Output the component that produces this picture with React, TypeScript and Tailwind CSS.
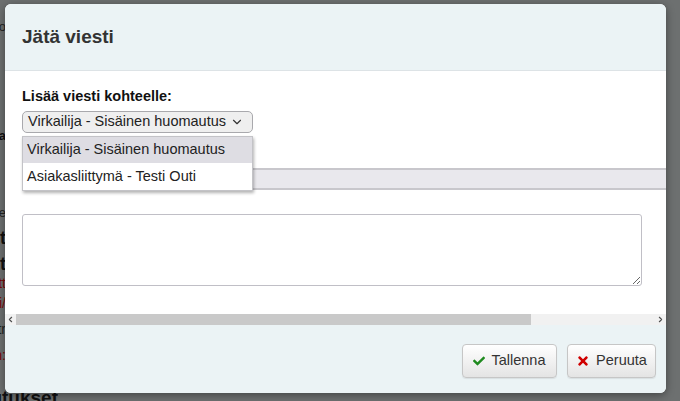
import { ChevronDown, ChevronLeft, ChevronRight } from 'lucide-react'
import { FaCheck, FaTimes } from 'react-icons/fa'

const font = { fontFamily: '"Liberation Sans", Arial, sans-serif' }

// page fragments that peek out from behind the modal on the left
const edgeRows = [
  { h: 'h-[20px]', text: '', cls: '' },
  { h: 'h-[14px]', text: 'Toimitusehto', cls: 'text-[13px] text-[#222]' },
  { h: 'h-[92px]', text: '', cls: '' },
  { h: 'h-[20px]', text: 'Tila', cls: 'text-[13px] font-bold text-[#111]' },
  { h: 'h-[56px]', text: '', cls: '' },
  { h: 'h-[22px]', text: 'Tuote', cls: 'text-[13px] text-[#222]' },
  { h: 'h-[28px]', text: 'Tilaukset', cls: 'text-[18px] font-bold text-[#111]' },
  { h: 'h-[24px]', text: 'Tiedot', cls: 'text-[18px] font-bold text-[#111]' },
  { h: 'h-[14px]', text: 'Puuttuu tt', cls: 'text-[14px] text-[#7a0b0b]' },
  { h: 'h-[26px]', text: 'Kuljetus i/', cls: 'text-[14px] text-[#7a0b0b]' },
  { h: 'h-[26px]', text: 'Selitr', cls: 'text-[14px] text-[#222]' },
  { h: 'h-[26px]', text: 'Huom:', cls: 'text-[14px] text-[#7a0b0b]' },
  { h: 'h-[20px]', text: '', cls: '' },
]

function Button({ icon, label, width }: { icon: React.ReactNode; label: string; width: string }) {
  return (
    <button
      type="button"
      className={`flex h-[34px] ${width} items-center justify-center gap-[6px] rounded-[4px] border border-[#c6c6c6] bg-gradient-to-b from-white to-[#e4e4e4] text-[14.5px] text-[#333] shadow-[0_1px_1px_rgba(0,0,0,0.08)]`}
    >
      {icon}
      <span>{label}</span>
    </button>
  )
}

export default function App() {
  return (
    <div className="relative h-[401px] w-[680px] overflow-hidden bg-[#6d7070]" style={font}>
      <div className="flex flex-col">
        {edgeRows.map((row, i) => (
          <div key={i} className={`${row.h} flex w-[6px] items-center justify-end overflow-hidden whitespace-nowrap`}>
            <span className={row.cls}>{row.text}</span>
          </div>
        ))}
        <div className="flex w-[58px] items-start justify-end overflow-hidden whitespace-nowrap">
          <span className="text-[19px] font-bold leading-none text-[#111]">Huomautukset</span>
        </div>
      </div>

      <div className="absolute left-[5px] top-[4px] flex h-[389px] w-[661px] flex-col overflow-hidden rounded-[6px] bg-white shadow-[0_2px_8px_rgba(0,0,0,0.4)]">
        <div className="flex h-[67px] shrink-0 items-center border-b border-[#dde3e6] bg-[#ebf3f5] px-[17px]">
          <h1 className="text-[19px] font-bold text-[#333]">Jätä viesti</h1>
        </div>

        <div className="flex h-[254px] shrink-0 flex-col">
          <div className="flex-1 overflow-hidden">
            <div className="w-[820px] px-[17px] pt-[17px]">
              <label className="mb-[6px] block text-[14.5px] font-bold leading-[17px] text-[#111]">
                Lisää viesti kohteelle:
              </label>
              <div className="relative w-[231px]">
                <div className="flex h-[22px] items-center justify-between rounded-[5px] border border-[#a9a9ad] bg-[#efefef] pl-[5px] pr-[8px] text-[14.5px] text-[#222]">
                  <span>Virkailija - Sisäinen huomautus</span>
                  <ChevronDown size={14} strokeWidth={2} className="text-[#333]" />
                </div>
                <div className="absolute left-0 top-[25px] z-10 w-[231px] border border-[#c3c3c7] bg-white shadow-[1px_2px_3px_rgba(0,0,0,0.3)]">
                  <div className="flex h-[26px] items-center bg-[#dedde3] pl-[4px] text-[14.5px] text-[#222]">
                    Virkailija - Sisäinen huomautus
                  </div>
                  <div className="flex h-[27px] items-center pl-[4px] text-[14.5px] text-[#222]">
                    Asiakasliittymä - Testi Outi
                  </div>
                </div>
              </div>
              <div className="mt-[35px] h-[22px] w-[790px] border-y-2 border-[#c8c7cc] bg-[#e9e8ed]" />
              <textarea className="mt-[24px] block h-[72px] w-[620px] rounded-[3px] border border-[#c0bfc6] bg-white outline-none" />
            </div>
          </div>
          <div className="flex h-[11px] shrink-0 items-stretch bg-[#f1f1f1]">
            <div className="flex w-[11px] items-center justify-center">
              <ChevronLeft size={9} strokeWidth={3} className="text-[#505050]" />
            </div>
            <div className="w-[515px] bg-[#c9c9c9]" />
            <div className="flex-1" />
            <div className="flex w-[11px] items-center justify-center">
              <ChevronRight size={9} strokeWidth={3} className="text-[#505050]" />
            </div>
          </div>
        </div>

        <div className="flex flex-1 items-center justify-end gap-[10px] bg-[#ebf3f5] pr-[10px] pt-[3px]">
          <Button icon={<FaCheck size={12} className="text-[#1e8a1e]" />} label="Tallenna" width="w-[95px]" />
          <Button icon={<FaTimes size={14} className="text-[#d00000]" />} label="Peruuta" width="w-[89px]" />
        </div>
      </div>
    </div>
  )
}
